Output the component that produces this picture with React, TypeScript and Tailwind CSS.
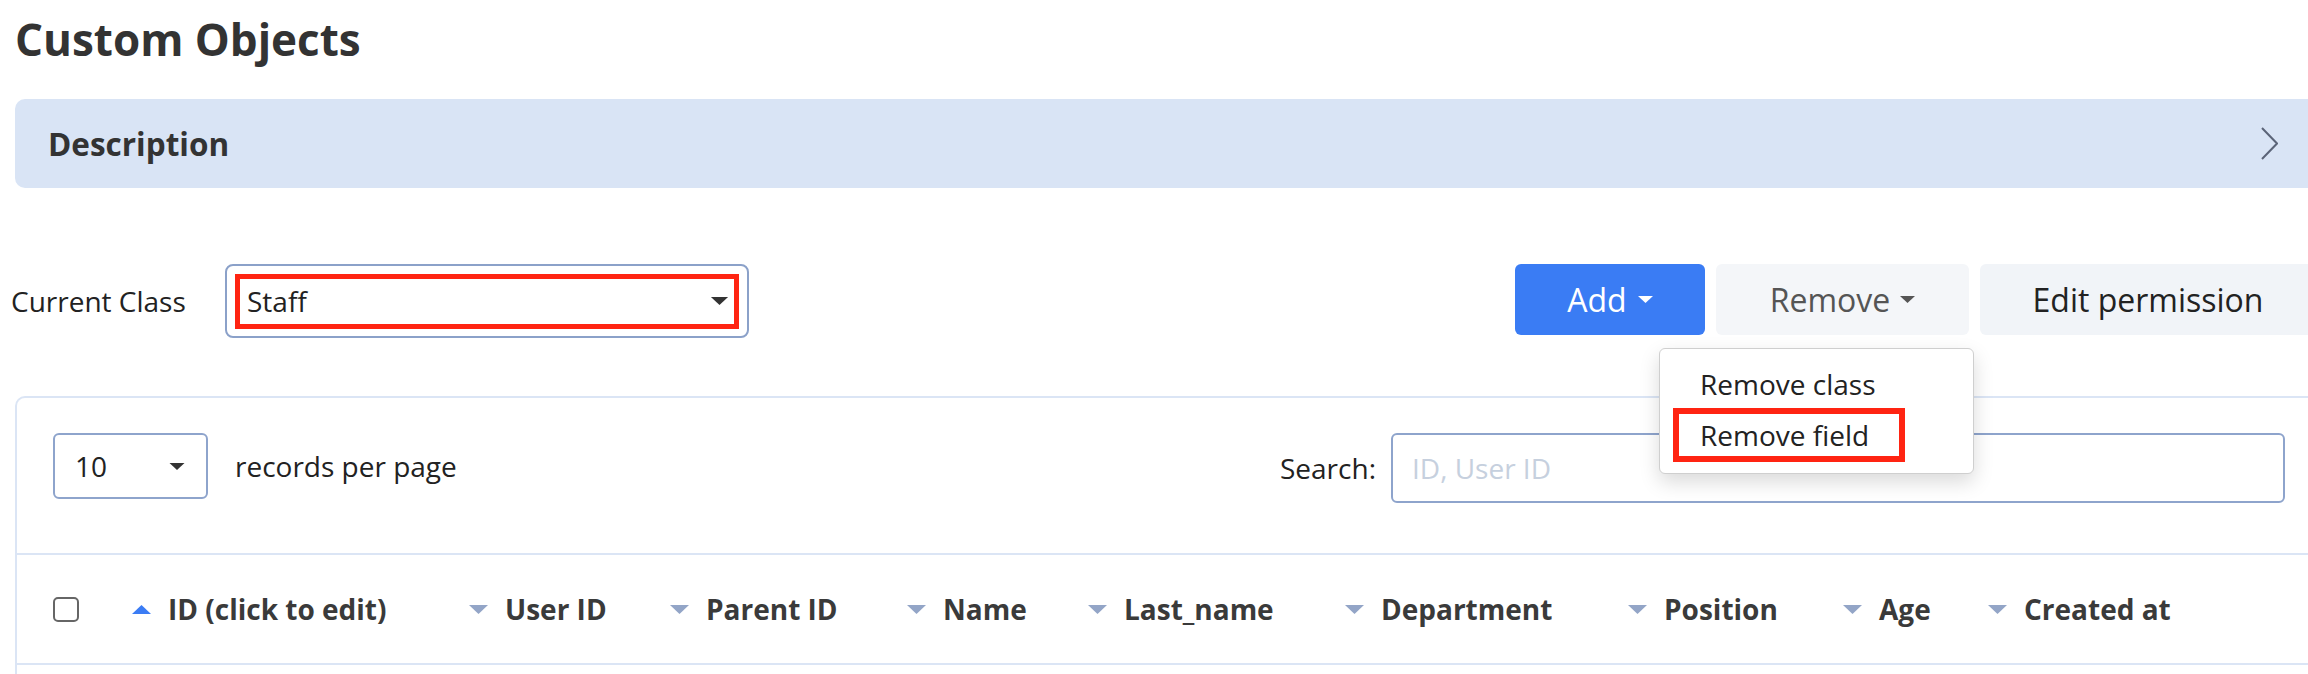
import React from "react";

interface Column {
  label: string;
  width: string;
  active?: boolean;
}

const columns: Column[] = [
  { label: "ID (click to edit)", width: "w-[337px]", active: true },
  { label: "User ID", width: "w-[201px]" },
  { label: "Parent ID", width: "w-[237px]" },
  { label: "Name", width: "w-[181px]" },
  { label: "Last_name", width: "w-[257px]" },
  { label: "Department", width: "w-[283px]" },
  { label: "Position", width: "w-[215px]" },
  { label: "Age", width: "w-[145px]" },
  { label: "Created at", width: "flex-1" },
];

function Caret({ className }: { className: string }) {
  return (
    <svg width="15" height="7" viewBox="0 0 15 7" className={className}>
      <polygon points="0,0 15,0 7.5,7" fill="currentColor" />
    </svg>
  );
}

function SortArrow({ up }: { up?: boolean }) {
  return (
    <svg width="19" height="9" viewBox="0 0 19 9" className="mr-[17px] shrink-0">
      {up ? (
        <polygon points="0,9 19,9 9.5,0" fill="#3b7cf4" />
      ) : (
        <polygon points="0,0 19,0 9.5,9" fill="#93a5c7" />
      )}
    </svg>
  );
}

export default function App() {
  return (
    <div className="w-full overflow-hidden bg-white font-['Open_Sans',sans-serif] text-[28px] text-[#222]">
      <div className="ml-[15px] w-[2301px] pt-[14px]">
        <h1 className="text-[44px] font-bold leading-[50px] text-[#333]">Custom Objects</h1>

        <div className="mt-[35px] flex h-[89px] items-center justify-between rounded-l-[10px] bg-[#d9e4f5] pl-[33px] pr-[38px]">
          <span className="text-[31.5px] font-bold text-[#333]">Description</span>
          <svg width="17" height="33" viewBox="0 0 17 33">
            <polyline points="1,1 16,16.5 1,32" fill="none" stroke="#5b6478" strokeWidth="2" />
          </svg>
        </div>

        <div className="mt-[76px] flex items-start justify-between">
          <div className="flex h-[74px] items-center">
            <span className="ml-[-4px] w-[214px]">Current Class</span>
            <div className="flex h-[74px] w-[524px] items-center justify-center rounded-[8px] border-2 border-[#8ba1c9]">
              <div className="flex h-[55px] w-[504px] items-center justify-between border-[5px] border-[#ff2412] pl-[7px] pr-[5px]">
                <span>Staff</span>
                <Caret className="h-[8px] w-[19px] text-[#333]" />
              </div>
            </div>
          </div>

          <div className="flex gap-[11px] text-[32px]">
            <button className="flex h-[71px] w-[190px] items-center justify-center gap-[11px] rounded-[6px] bg-[#3a7cf4] text-white">
              Add
              <Caret className="text-white" />
            </button>
            <div className="relative">
              <button className="flex h-[71px] w-[253px] items-center justify-center gap-[10px] rounded-[6px] bg-[#f4f6f9] text-[#555]">
                Remove
                <Caret className="text-[#555]" />
              </button>
              <div className="absolute right-[-5px] top-[84px] z-10 w-[315px] rounded-[6px] border border-[#cfcfcf] bg-white pb-[11px] pt-[14px] text-[28px] shadow-[0_8px_20px_rgba(0,0,0,0.15)]">
                <div className="pl-[40px] leading-[42px] text-[#222]">Remove class</div>
                <div className="mx-[13px] mt-[3px] w-[232px] border-[6px] border-[#ff2412] pl-[21px] leading-[42px] text-[#222]">
                  Remove field
                </div>
              </div>
            </div>
            <button className="h-[71px] w-[336px] rounded-[6px] bg-[#f1f4f8] text-[#222]">Edit permission</button>
          </div>
        </div>

        <div className="mt-[58px] rounded-tl-[10px] border-2 border-r-0 border-[#dbe5f5]">
          <div className="flex items-start justify-between border-b-2 border-[#dbe5f5] pb-[50px] pl-[36px] pr-[31px] pt-[35px]">
            <div className="flex h-[66px] items-center">
              <div className="flex h-[66px] w-[155px] items-center justify-between rounded-[6px] border-2 border-[#8ea4cc] pl-[20px] pr-[20px]">
                <span>10</span>
                <Caret className="h-[7px] w-[18px] text-[#333]" />
              </div>
              <span className="ml-[27px]">records per page</span>
            </div>
            <div className="flex h-[70px] items-center">
              <span className="mr-[15px]">Search:</span>
              <input
                placeholder="ID, User ID"
                className="h-[70px] w-[894px] rounded-[6px] border-2 border-[#8ea4cc] pl-[19px] text-[28px] outline-none placeholder:text-[#c6d0de]"
              />
            </div>
          </div>

          <div className="flex h-[110px] items-center border-b-2 border-[#dbe5f5] pl-[36px] font-bold text-[#3a3a3a]">
            <div className="w-[79px]">
              <div className="h-[25px] w-[26px] rounded-[5px] border-2 border-[#666]" />
            </div>
            {columns.map((col) => (
              <div key={col.label} className={`${col.width} flex items-center`}>
                <SortArrow up={col.active} />
                <span>{col.label}</span>
              </div>
            ))}
          </div>
          <div className="h-[40px]" />
        </div>
      </div>
    </div>
  );
}
